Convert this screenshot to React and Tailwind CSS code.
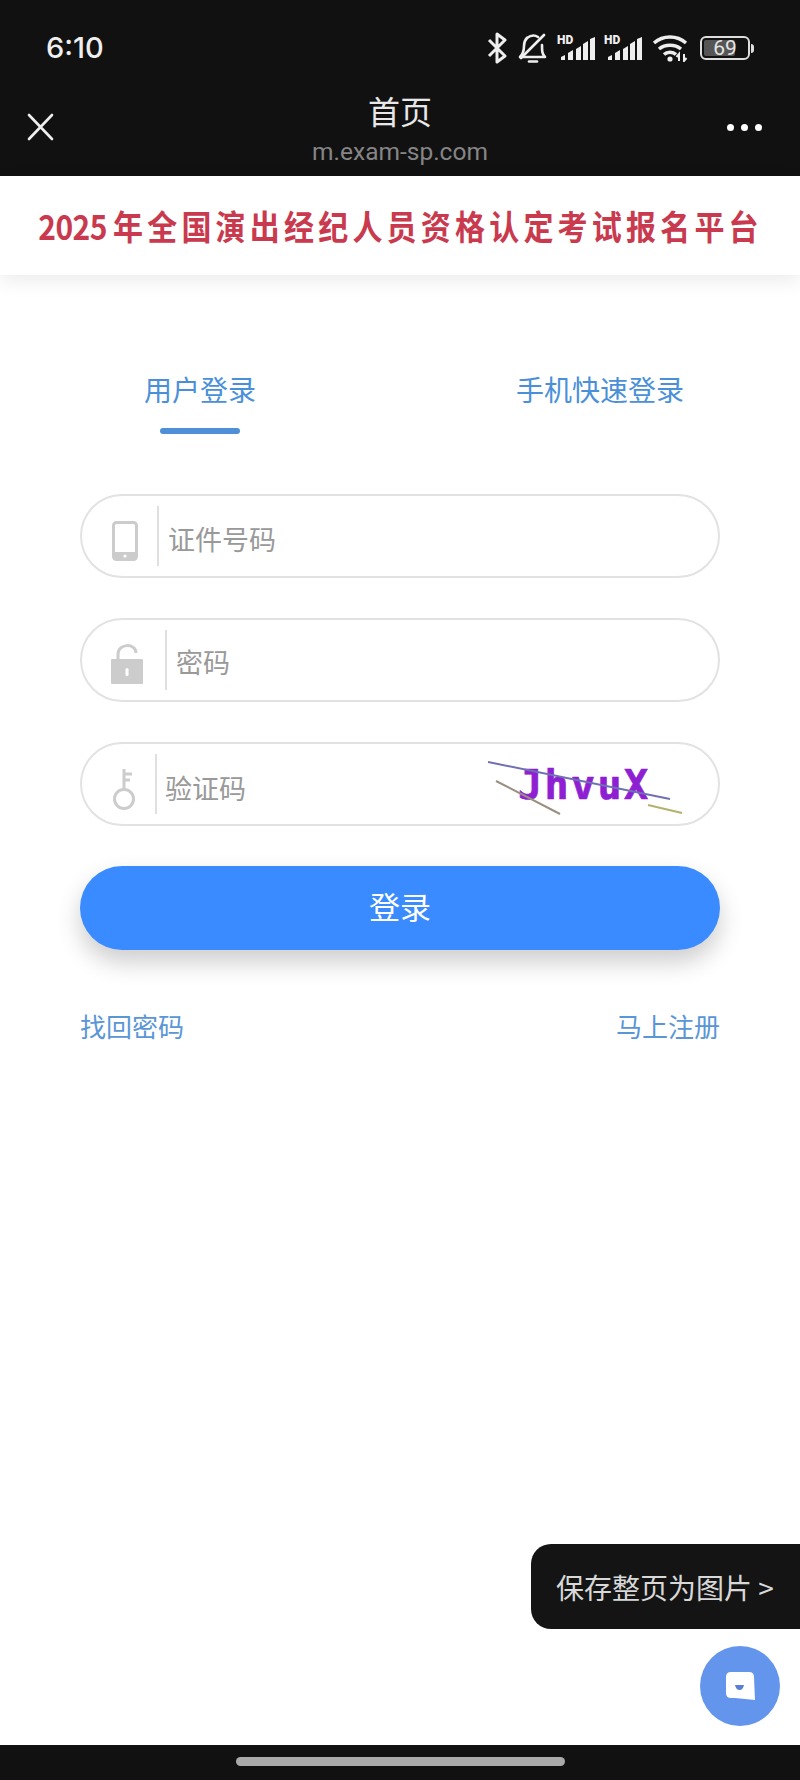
const cjk = { fontFamily: '"Noto Sans CJK SC", "Noto Sans", sans-serif' };

function Signal() {
  return (
    <div className="relative w-[40px] h-[24px]">
      <span className="absolute left-[1px] top-[-1px] text-[12px] leading-[10px] font-black text-[#eee]" style={{ fontFamily: 'Roboto, sans-serif' }}>HD</span>
      <svg width="40" height="24" viewBox="0 0 40 24" className="block">
        <path d="M5 24v-3l4-2v5z" fill="#eee" />
        <path d="M12 24v-7l5-3v10z" fill="#eee" />
        <path d="M20 24V13l5-3v14z" fill="#eee" />
        <path d="M27 24V8l5-3v19z" fill="#eee" />
        <path d="M34 24V3l5-2v23z" fill="#eee" />
      </svg>
    </div>
  );
}

function StatusBar() {
  return (
    <div className="h-[84px] pl-[46px] pr-[46px] flex items-center justify-between pt-[12px]">
      <span className="text-[29px] font-medium text-[#eee]" style={{ fontFamily: 'Inter, sans-serif' }}>6:10</span>
      <div className="flex items-center">
        <svg width="20" height="32" viewBox="0 0 20 32" fill="none" stroke="#eee" strokeWidth="3" strokeLinejoin="round" className="mr-[11px]">
          <path d="M2 8l16 16-8 6V2l8 6L2 24" />
        </svg>
        <svg width="30" height="32" viewBox="0 0 30 32" fill="none" stroke="#eee" strokeWidth="2.6" strokeLinecap="round" strokeLinejoin="round" className="mr-[8px]">
          <path d="M2 25h25c-3-3-3-6-3-12M9 6c-2 2-3 4-3 8 0 5-1 8-4 11" />
          <path d="M9 6c4-3 8-3 11-1M3 26 26 3" />
          <path d="M11 29.500h8" />
        </svg>
        <Signal />
        <div className="w-[7px]" />
        <Signal />
        <svg width="36" height="28" viewBox="0 0 36 28" fill="none" stroke="#eee" strokeWidth="3.4" className="ml-[9px]">
          <path d="M2 9c9-8 23-8 32 0" />
          <path d="M7 15c6-5 16-5 22 0" />
          <path d="M12 20.500c3-3 9-3 12 0" />
          <circle cx="18" cy="25" r="2.600" fill="#eee" stroke="none" />
          <path d="M27 27v-7l-2.500 3M32 20v7l2.500-3" strokeWidth="2" />
        </svg>
        <div className="ml-[12px] flex items-center">
          <div className="relative w-[50px] h-[24px] rounded-[6px] border-2 border-[#ddd] overflow-hidden flex items-center justify-center">
            <div className="absolute left-[2px] top-[2px] bottom-[2px] w-[31px] rounded-[2px] bg-[#555]" />
            <span className="relative text-[21px] leading-none text-[#e4e4e4]" style={{ fontFamily: 'Roboto, sans-serif' }}>69</span>
          </div>
          <div className="w-[3px] h-[9px] ml-[1px] rounded-r-sm bg-[#ddd]" />
        </div>
      </div>
    </div>
  );
}

function Header() {
  return (
    <div className="relative h-[92px] flex flex-col items-center">
      <div className="absolute left-[27px] top-[29px]">
        <svg width="27" height="28" viewBox="0 0 27 28" stroke="#eee" strokeWidth="2.6" strokeLinecap="round">
          <path d="M2 2l23 24M25 2 2 26" />
        </svg>
      </div>
      <span className="text-[32px] leading-[40px] mt-[6px] text-[#e8e8e8]" style={cjk}>首页</span>
      <span className="text-[24.500px] leading-[28px] mt-[8px] text-[#858585]" style={{ fontFamily: 'Roboto, sans-serif' }}>m.exam-sp.com</span>
      <div className="absolute right-[38px] top-[40px] flex gap-[7px]">
        <span className="w-[7px] h-[7px] rounded-full bg-white" />
        <span className="w-[7px] h-[7px] rounded-full bg-white" />
        <span className="w-[7px] h-[7px] rounded-full bg-white" />
      </div>
    </div>
  );
}

function Field({ icon, placeholder, dividerClass, inputClass, children }) {
  return (
    <div className="h-[84px] rounded-full border-2 border-[#e2e2e2] bg-white flex items-center relative">
      <div className="w-[76px] flex justify-end pr-[12px]">{icon}</div>
      <div className={`w-[2px] h-[60px] bg-[#e0e0e0] ${dividerClass}`} />
      <input placeholder={placeholder} readOnly className={`flex-1 min-w-0 outline-none text-[27px] placeholder:text-[#999] ${inputClass}`} style={cjk} />
      {children}
    </div>
  );
}

const PhoneIcon = (
  <svg width="26" height="40" viewBox="0 0 26 40" className="mr-[8px] mt-[10px]">
    <rect x="1.5" y="1.500" width="23" height="37" rx="3" fill="none" stroke="#ccc" strokeWidth="3" />
    <rect x="1" y="31" width="24" height="8" rx="2" fill="#ccc" />
    <circle cx="13" cy="35" r="1.600" fill="#fff" />
  </svg>
);

const LockIcon = (
  <svg width="34" height="42" viewBox="0 0 34 42" className="mr-[2px] mt-[8px]">
    <path d="M8 18v-7c0-11 18-11 18-1" fill="none" stroke="#ccc" strokeWidth="3" />
    <rect x="1" y="16" width="32" height="25" rx="1" fill="#ccc" />
    <rect x="15.5" y="25" width="3" height="8" rx="1.500" fill="#fff" />
  </svg>
);

const KeyIcon = (
  <svg width="24" height="42" viewBox="0 0 24 42" fill="none" stroke="#ccc" strokeWidth="3" className="mr-[10px] mt-[10px]">
    <circle cx="12" cy="31" r="9.500" />
    <path d="M12 21V1M12 6h8M12 12h6" />
  </svg>
);

function Captcha() {
  return (
    <div className="absolute right-[34px] top-[17px] w-[196px] h-[60px]">
      <span className="absolute left-[30px] top-[2px] text-[40px] leading-[44px] font-bold tracking-[2.400px] text-[#8e1fd2] [-webkit-text-stroke:0.7px_#8e1fd2]" style={{ fontFamily: '"DejaVu Sans Mono", monospace' }}>JhvuX</span>
      <svg width="196" height="60" viewBox="0 0 196 60" className="absolute inset-0" fill="none">
        <path d="M0 1 182 38" stroke="#6f6fb4" strokeWidth="2" />
        <path d="M8 20 72 53" stroke="#9a9080" strokeWidth="2" />
        <path d="M160 44 194 52" stroke="#b5b06e" strokeWidth="2" />
      </svg>
    </div>
  );
}

export default function App() {
  return (
    <div className="relative min-h-[1780px] bg-white flex flex-col overflow-hidden" style={cjk}>
      <div className="bg-[#111111]">
        <StatusBar />
        <Header />
      </div>

      <div className="h-[99px] bg-white shadow-[0_6px_18px_rgba(0,0,0,0.08)] flex items-center justify-center">
        <h1 className="text-[30px] font-bold text-[#c93a4e] whitespace-nowrap scale-y-[1.14] ml-[1px]" style={cjk}>
          <span className="tracking-[-0.5px]">2025</span>
          <span className="tracking-[4.2px] ml-[6px]">年全国演出经纪人员资格认定考试报名平台</span>
        </h1>
      </div>

      <div className="px-[80px]">
        <div className="flex justify-between pt-[94px] text-[28px] leading-[40px] text-[#4a90d9]">
          <div className="ml-[64px] flex flex-col items-center">
            <span>用户登录</span>
            <span className="mt-[19px] w-[80px] h-[6px] rounded-full bg-[#4f8fd8]" />
          </div>
          <span className="mr-[36px]">手机快速登录</span>
        </div>

        <div className="mt-[60px] flex flex-col gap-[40px]">
          <Field icon={PhoneIcon} placeholder="证件号码" dividerClass="ml-[-1px]" inputClass="pl-[9px] pt-[6px]" />
          <Field icon={LockIcon} placeholder="密码" dividerClass="ml-[7px]" inputClass="pl-[9px] pt-[4px]" />
          <Field icon={KeyIcon} placeholder="验证码" dividerClass="ml-[-3px]" inputClass="pl-[8px] pt-[8px]">
            <Captcha />
          </Field>
          <button className="h-[84px] rounded-full bg-[#3a8bff] text-white text-[31px] pb-[4px] shadow-[0_12px_24px_rgba(0,0,0,0.2)]" style={cjk}>登录</button>
        </div>

        <div className="mt-[58px] flex justify-between text-[26px] leading-[36px] text-[#5a96d6]">
          <span>找回密码</span>
          <span>马上注册</span>
        </div>
      </div>

      <div className="mt-auto bg-[#111111] h-[35px] flex justify-center pt-[12px]">
        <div className="w-[329px] h-[9px] rounded-full bg-[#aaaaaa]" />
      </div>

      <div className="absolute right-0 top-[1544px] w-[269px] h-[85px] rounded-l-[20px] bg-[#141414] flex items-center pl-[25px] text-[28px] text-[#d8d8d8]">
        保存整页为图片 &gt;
      </div>

      <div className="absolute left-[700px] top-[1646px] w-[80px] h-[80px] rounded-full bg-[#6495ed] flex items-center justify-center">
        <svg width="30" height="30" viewBox="0 0 30 30">
          <path d="M6 1h18q5 0 5 5l1 23-20-2H6q-5 0-5-5V6q0-5 5-5z" fill="#fff" />
          <path d="M10 14h9q-1 5-4.500 5t-4.500-5z" fill="#5a7fd0" />
        </svg>
      </div>
    </div>
  );
}
